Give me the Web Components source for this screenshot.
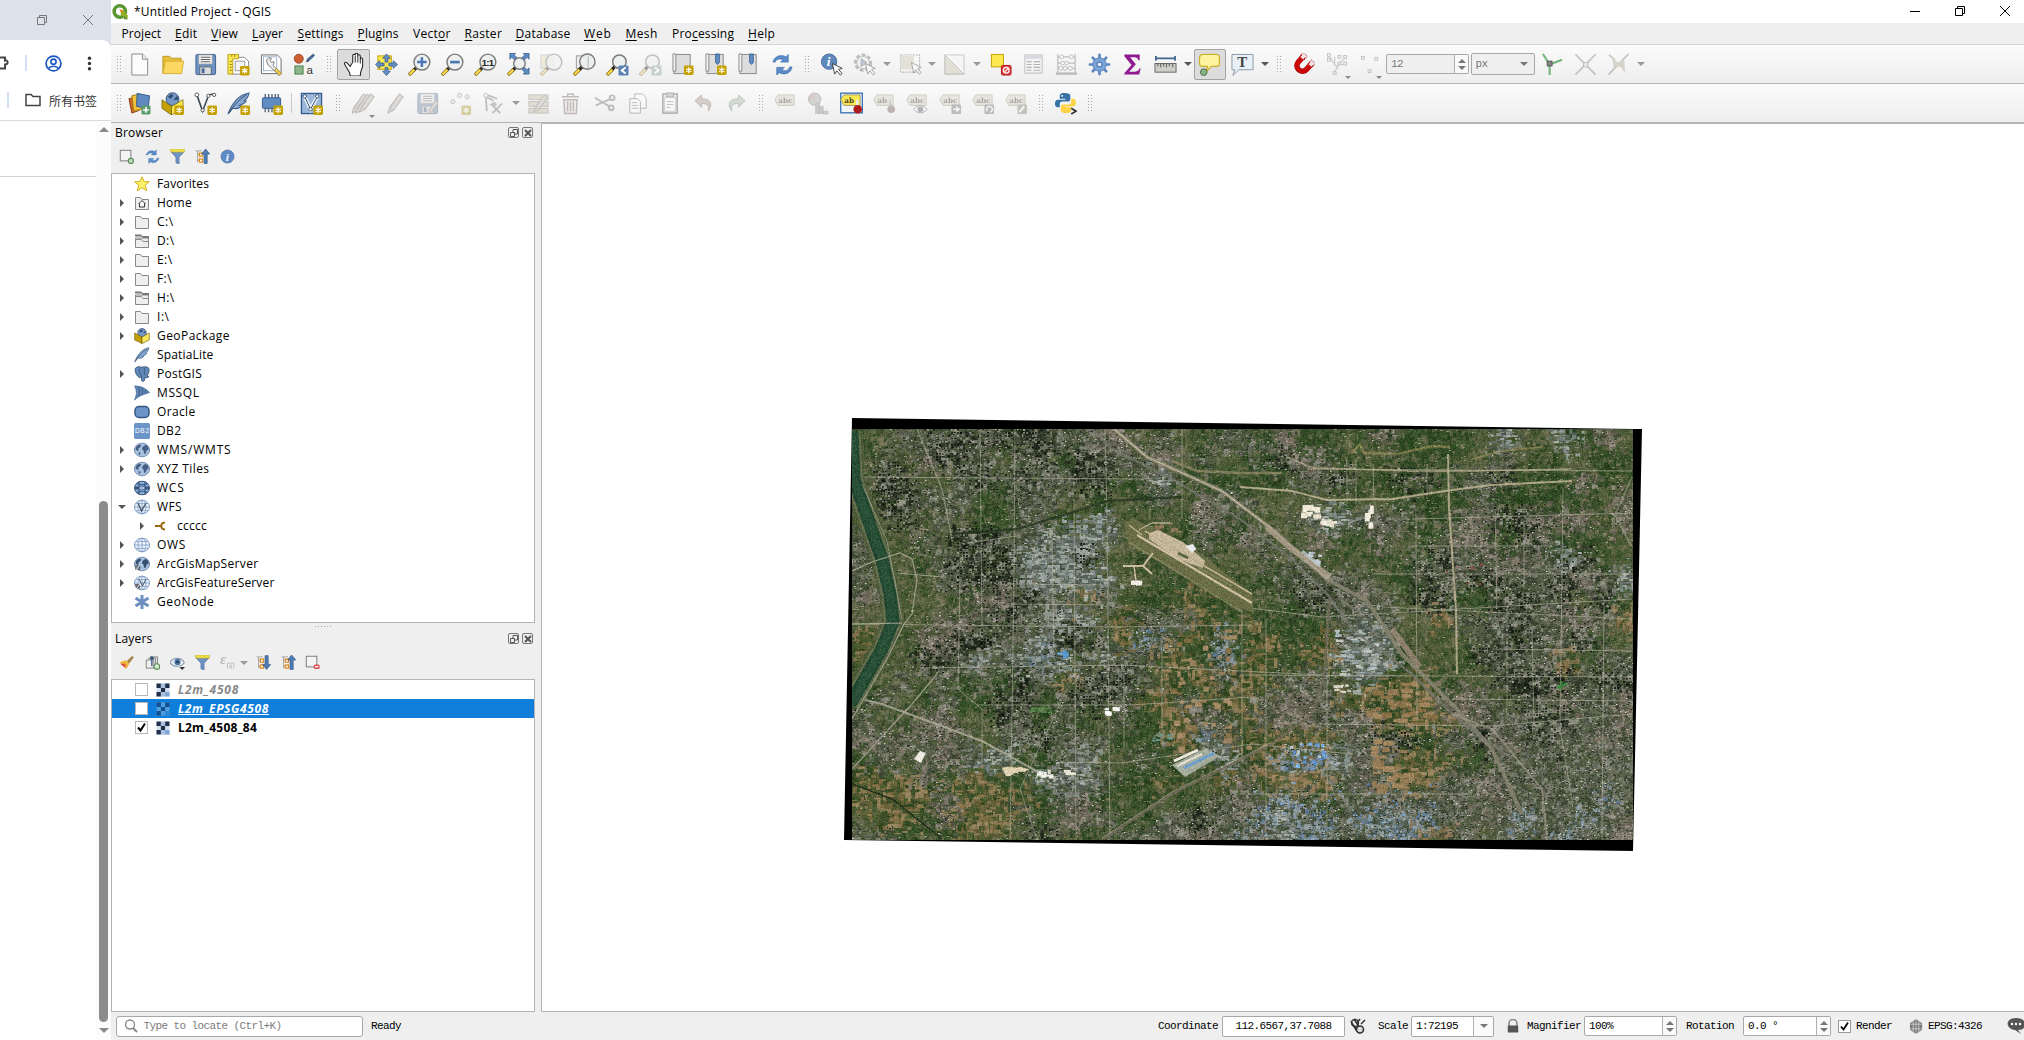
<!DOCTYPE html>
<html lang="en">
<head>
<meta charset="utf-8">
<title>*Untitled Project - QGIS</title>
<style>
html,body{margin:0;height:100%;overflow:hidden;background:#fff}
body{font:12px/16px "Open Sans","Noto Sans","Noto Sans CJK SC",sans-serif;color:#000}
</style>
</head>
<body>
<desk-top></desk-top>
<script>
/* ---------- icon library ---------- */
const star = (x, y) => `<rect x="${x}" y="${y}" width="10" height="10" rx="1.5" fill="#c4a000"/><path d="M${x+5} ${y+1.8}v6.4M${x+2.2} ${y+3.4}l5.6 3.2M${x+7.8} ${y+3.4}l-5.6 3.2" stroke="#fff" stroke-width="1.3"/>`;
const lens = (cx, cy, r, inner = '', hx = 1, hy = 23) => `<path d="M${cx-r*.7} ${cy+r*.7}L${hx+5} ${hy-5}" stroke="#222" stroke-width="3.4"/><path d="M${hx+6} ${hy-6}L${hx} ${hy}" stroke="#8a6a10" stroke-width="3.6"/><path d="M${hx+5.5} ${hy-5.5}L${hx+.6} ${hy-.6}" stroke="#fcd94f" stroke-width="2.2"/><circle cx="${cx}" cy="${cy}" r="${r}" fill="#eceeee" fill-opacity=".85" stroke="#7a7c7a" stroke-width="1.5"/>${inner}`;
const globe = (land = '#466085', base = '#a9c2e0') => `<ellipse cx="8" cy="8" rx="7.6" ry="6.8" fill="${base}" stroke="#6e87ab" stroke-width=".9"/><path d="M2.3 4.5l3-2 2 .8-1 2-2 1.2.5 2-1.5.2-1.8-1.2zM4.5 10l2 .6-.4 2.6-1.3-.6zM8.5 5l3-2.3 2.6 2.1.6 3-2 .7-1.2 3.4-1.6-.4-.3-3-1.6-1z" fill="${land}"/>`;
const grid = (c = '#7f9cc4') => `<ellipse cx="8" cy="8" rx="7.5" ry="6.8" fill="#eef4fb" stroke="${c}"/><path d="M.6 8h14.8M2 4.6h12M2 11.4h12M8 1.2v13.6" stroke="${c}" stroke-width=".8" fill="none"/><ellipse cx="8" cy="8" rx="4" ry="6.8" fill="none" stroke="${c}" stroke-width=".8"/>`;
const folder = '<path d="M1.500 14.500V2.500h5l1.500 2h6.500v10z" fill="#eee" stroke="#888a85"/>';
const sheet = (h) => `<rect x="2" y="1.5" width="17" height="20" fill="#ddd" stroke="#888"/><path d="M1 1h3v18H1z" fill="#f3f3f3" stroke="#888"/>${h}`;
const tag = (t, f='#d6d3b4') => `<path d="M.7 8l3.500-5H21v11H4.200z" fill="${f}" stroke="#a09c70"/><text x="4.500" y="11.300" font-family="DejaVu Serif" font-weight="700" font-size="7.500" fill="#45422a">${t}</text>`;
const node = (x,y)=>`<rect x="${x-1.5}" y="${y-1.5}" width="3" height="3" fill="#eee" stroke="#777" stroke-width=".9"/>`;
const cursor = '<path d="M13 11l2.300 11 2.300-3.400 3.600 4.400 1.800-1.600-3.600-4.300 3.800-1z" fill="#fff" stroke="#333" stroke-width=".9"/>';
const refresh = '<path d="M2 9C3 4 9 0 15.500 3.500L18 1v8h-8l2.500-2.500C9 5 5 6 4.500 9zM22 14c-1 6-7 9.500-13.500 6L6 22.500v-8h8L11.500 17c3.500 2 7 .5 8-3z" transform="translate(0 .5)" fill="#5b8cc8" stroke="#2f66ab" stroke-width=".6"/>';
const pencil = (x,y,s,c='#c4bbb2') => `<path transform="translate(${x} ${y}) scale(${s})" d="M0 20l2-6L12 0l4 3L6 17z" fill="${c}" stroke="#7d7770" stroke-width="1.100"/><path transform="translate(${x} ${y}) scale(${s})" d="M2 14l4 3M10 3l-7 11" stroke="#8d8780"/>`;
const treeg = (p) => `<path d="M4 3v18M4 8h6M4 18h6M1 3h10" fill="none" stroke="#999" stroke-width="1.3"/><rect x="7" y="6.500" width="5" height="5" fill="#fff" stroke="#e08a1e" stroke-width="2"/><rect x="7" y="16" width="5" height="5" fill="#fff" stroke="#e08a1e" stroke-width="2"/>${p}`;
const ICON = {
 qgis:'<circle cx="11" cy="12" r="8" fill="none" stroke="#589632" stroke-width="5"/><path d="M12 10l4.500 1 6 7-1 4-3 1-6-7z" fill="#93b023"/><path d="M17 18l6 5h-6z" fill="#589632"/><path d="M10 9l5 .5-.5 5z" fill="#ee7913"/>',
 new:'<path d="M4 1h11l5.500 5.500V23H4z" fill="#fcfcfc" stroke="#888a85"/><path d="M15 1v5.500h5.500" fill="#eee" stroke="#888a85"/>',
 open:'<path d="M2 21V3.500h7l2 2h10V10" fill="#e8c13c" stroke="#b8951f"/><path d="M2 21.500L4.500 8.500H23.500L21.500 21.500z" fill="#fcd863" stroke="#d6ae2f"/>',
 save:'<rect x="2" y="1.500" width="20.500" height="21" rx="1.500" fill="#6d94c4" stroke="#3f5f8b"/><rect x="5" y="2" width="14" height="9.500" fill="#f2f2f2" stroke="#999" stroke-width=".7"/><path d="M7 4.500h10M7 6.800h10M7 9.100h10" stroke="#666" stroke-width="1.100"/><rect x="6" y="14.500" width="12" height="8" fill="#dcdcdc" stroke="#567"/><rect x="8" y="16" width="3" height="5" fill="#456a9c"/>',
 layout:`<path d="M4.500 4.500H18l4.500 4V22h-18z" fill="#fff" stroke="#888a85"/><path d="M1 1.500h11v4.500H6v16H1z" fill="#fce94f" stroke="#b89b1c"/><path d="M3 9h2M3 12h2M3 15h2M3 18h2M5 2v2M8 2v2" stroke="#8a7414"/><rect x="8.500" y="8.500" width="10" height="10" fill="#f4f4f4" stroke="#9a9a9a"/>${star(13.500,13.500)}`,
 manager:'<path d="M1.500 2H18l4 4v15.500H1.500z" fill="#fff" stroke="#666b70"/><rect x="3.500" y="4" width="14" height="14.500" fill="#fff" stroke="#8aa0be" stroke-width=".8"/><path d="M7 7c1-1.500 3-2.500 5-1.500l-1.500 2.500 1.500 1.800 2.500-.8c.5 2 0 3-1 4L22 21l-2 2.500-9-9C8.500 13.500 6.500 10 7 7z" fill="#eee" stroke="#777"/><path d="M17 16l5.500 5-2 2.500-5.500-5.500z" fill="#e8cf52" stroke="#8a7520" stroke-width=".6"/>',
 style:'<circle cx="6" cy="6" r="4.700" fill="#cf5f33" stroke="#8a3a1a" stroke-width=".8"/><path d="M15 8L22 1.500" stroke="#4a6a94" stroke-width="3"/><path d="M13 10l2-3 1.500 1.500z" fill="#333"/><rect x="2" y="13.500" width="8.500" height="8.500" fill="#8cb88c" stroke="#4a7d4a"/><text x="14" y="22" font-family="Liberation Sans" font-size="12" fill="#333">a</text>',
 hand:'<path d="M8.500 14L5.200 10.400C3.500 8.800 1.800 10.500 3 12.200L8 20.500 8.500 24H19l.500-4 2-6V6.500c0-1.700-2.400-1.700-2.400 0V3.300c0-1.900-2.600-1.900-2.600 0V1.600c0-1.900-2.700-1.900-2.700 0V2.600c0-1.800-2.600-1.600-2.600 0v7z" fill="#fff" stroke="#222" stroke-width="1.100"/><path d="M13.800 3v7M16.500 3v7M19.100 6v5" stroke="#222" stroke-width="1"/>',
 pansel:'<rect x="3" y="3" width="14" height="14" fill="#fce94f" stroke="#c4a000"/><path d="M12 1l4 4.500h-2.500v4h-3v-4H8zM12 23.500l4-4.500h-2.500v-4h-3v4H8zM.5 12L5 8v2.500h4.500v3H5V16zM23.500 12L19 8v2.500h-4.500v3H19V16z" fill="#6690c4" stroke="#345b8e" stroke-width=".8"/>',
 zin:lens(14.500,9.500,8.300,'<path d="M14.500 4.500v10M9.500 9.500h10" stroke="#4a78b4" stroke-width="2.600"/>'),
 zout:lens(14.500,9.500,8.300,'<path d="M9.500 9.500h10" stroke="#4a78b4" stroke-width="2.800"/>'),
 z11:lens(14.500,9.500,8.300,'<text x="8" y="13.300" font-family="Liberation Sans" font-weight="700" font-size="10" textLength="13" fill="#222">1:1</text>'),
 zfull:lens(13,11,6,'<path d="M3 0h6L7.500 2l2.700 2.700L7.700 7 5 4.500 3 6.500zM23 0h-6l1.500 2-2.700 2.700L18.300 7 21 4.500l2 2zM23 22h-6l1.500-2-2.700-2.700 2.500-2.300L21 17.500l2-2z" fill="#5f8bc0" stroke="#345b8e" stroke-width=".8"/>'),
 zsel:'<rect x="1" y="2" width="13" height="14" fill="#e8dfa8" stroke="#aaa"/>'+lens(14.500,9.500,8.300),
 zlay:'<rect x="3.500" y="3" width="12" height="13" fill="#eee" stroke="#999"/>'+lens(15,9,8,'<path d="M16 3.500v12" stroke="#bbb"/>'),
 zlast:lens(14,9,7,'<rect x="13" y="13" width="10.500" height="10.500" rx="1" fill="#5d83b5"/><path d="M20.500 15l-4 3.200 4 3.200" fill="none" stroke="#fff" stroke-width="2"/>'),
 znext:lens(14,9,7,'<rect x="13" y="13" width="10.500" height="10.500" rx="1" fill="#8aa"/><path d="M16.500 15l4 3.200-4 3.200" fill="none" stroke="#fff" stroke-width="2"/>'),
 nmap:sheet(star(12.500,13)),
 nbook:sheet('<path d="M11 1h4v9l-2 2-2-2z" fill="#5f8bc0" stroke="#345b8e" stroke-width=".8"/>'+star(12.500,13)),
 book:sheet('<path d="M12 1h4v9l-2 2-2-2z" fill="#5f8bc0" stroke="#345b8e" stroke-width=".8"/>'),
 refresh,
 ident:`<circle cx="9.500" cy="9" r="8" fill="#5f88bd" stroke="#466f9f"/><text x="7" y="13.500" font-family="Liberation Serif" font-style="italic" font-weight="700" font-size="14" fill="#fff">i</text>${cursor}`,
 action:`<circle cx="10.500" cy="10" r="8" fill="none" stroke="#777" stroke-width="3" stroke-dasharray="4 2"/><circle cx="10.500" cy="10" r="6.500" fill="#eee" stroke="#777"/><path d="M8.500 6l6 4-6 4z" fill="#6d94c4" stroke="#556"/>${cursor}`,
 select:`<rect x="1.500" y="2" width="20" height="18" fill="none" stroke="#555" stroke-dasharray="2 1.200"/><rect x="1.500" y="3" width="14" height="14" fill="#cfc8a6"/><g transform="translate(0 -1)">${cursor}</g>`,
 desel:'<path d="M2 2h20v20H2z" fill="#f5f5f3" stroke="#888"/><path d="M2 2v20h20z" fill="#cfc8a6" stroke="#888"/><path d="M4 2L22 20" stroke="#fff" stroke-width="1.500"/>',
 unsel:'<rect x="2.500" y="1.500" width="12.500" height="13" fill="#fce94f" stroke="#c4a000"/><rect x="13" y="13" width="10" height="10" rx="1.500" fill="#e04040" stroke="#b01010"/><circle cx="18" cy="18" r="3" fill="none" stroke="#fff" stroke-width="1.300"/><path d="M16 20l4-4" stroke="#fff" stroke-width="1.300"/>',
 table:'<rect x="3" y="2" width="18" height="19" fill="#f3f3f3" stroke="#777"/><rect x="3.500" y="2.500" width="17" height="3.500" fill="#a9b8cc"/><path d="M5 9h5M12 9h7M5 12h5M12 12h7M5 15h5M12 15h7M5 18h5M12 18h7" stroke="#666" stroke-width="1.200"/>',
 abacus:'<path d="M3 1v20M21 1v20M3 4h18M3 10.500h18M3 16h18" stroke="#777" stroke-width="1.300"/><g fill="#fff" stroke="#777"><circle cx="7" cy="4" r="2"/><circle cx="17" cy="4" r="2"/><circle cx="8" cy="10.500" r="2"/><circle cx="12" cy="10.500" r="2"/><circle cx="6" cy="16" r="2"/><circle cx="10.500" cy="16" r="2"/><circle cx="16" cy="16" r="2"/></g><path d="M1 21.500h22" stroke="#777" stroke-width="2.500"/>',
 gear:'<g stroke="#5b86be" stroke-width="2.800" stroke-linecap="round"><path d="M12 2v20M2 12h20M5 5l14 14M19 5L5 19"/></g><circle cx="12" cy="12" r="7" fill="#7fa4d6" stroke="#5b86be"/><circle cx="12" cy="12" r="3.500" fill="#5b86be"/><circle cx="12" cy="12" r="1.800" fill="#eef"/>',
 sigma:'<path d="M3.500 1.500h16v6h-1.500c-.5-2-1.500-3-4-3H9.500l6 7.300L8.500 19.500h6c3 0 4-1.500 5-3.500h1L19 22.500H3.500V21l7.500-8.500-7.500-9z" fill="#8f1a92"/>',
 meas:'<path d="M2 5.500h20M2 3v5M22 3v5" stroke="#41658f" stroke-width="1.800"/><rect x="1" y="11" width="22" height="9" fill="#cfcfc8" stroke="#666"/><path d="M4 11v3M7 11v4M10 11v3M13 11v4M16 11v3M19.500 11v4" stroke="#555"/>',
 tip:'<path d="M5 1.500h14c3 0 3.500 1.500 3.500 6.500s-.5 6-3.500 6h-5l-5.500 5.500 1.500-5.500H5c-3 0-3.500-1-3.500-6S2 1.500 5 1.500z" fill="#fdf3a0" stroke="#cbb02b" stroke-width="1.300"/><circle cx="6" cy="20" r="3.500" fill="#87b187" stroke="#49704b"/>',
 T:'<path d="M1 1.500h22v16H8L2 23.500l2-6H1z" fill="#e9f1f8" stroke="#8a96a3"/><text x="6.500" y="14.500" font-family="Liberation Serif" font-weight="700" font-size="15.500" fill="#444">T</text>',
 magnet:'<g transform="translate(12 12) rotate(42) scale(.82) translate(-12 -11)"><path d="M5 3v10a7 7 0 0 0 14 0V3" fill="none" stroke="#a40000" stroke-width="7"/><path d="M5 6v7a7 7 0 0 0 14 0V6" fill="none" stroke="#cc0a0a" stroke-width="5.500"/><path d="M5 1.500v5M19 1.500v5" stroke="#f4dede" stroke-width="5"/><path d="M1.500 6.500V0h7v6.500M15.500 6.500V0h7v6.500" stroke="#a40000" stroke-dasharray="2 1"/></g>',
 vtx:'<path d="M3 3l6 9 4 4M9 12V4M9 20l4-8 8-8M13 12h8" stroke="#999" fill="none" stroke-width="1.300"/>'+node(3,2)+node(3,7)+node(14,4)+node(20,4)+node(14,11)+node(20,11)+node(9,21),
 pts:node(4,5)+node(18,6)+node(11,19),
 trace:'<path d="M9 23V12L2 1M9 12l13-5" stroke="#73b57a" stroke-width="2.200" fill="none"/><rect x="6.500" y="8.500" width="5" height="5" fill="#888" stroke="#555"/>',
 cross:'<path d="M1.500 1.500l21 21M22.500 1.500l-21 21" stroke="#888" stroke-width="1.800"/><rect x="10" y="10" width="4.500" height="4.500" fill="#ddd" stroke="#777"/>',
 selfx:'<path d="M22.500 1L1.500 22.500M2 2l6 5" stroke="#888" stroke-width="1.800"/><path d="M5 3l6 7 7-3 1 14-5-7-7 1z" fill="#b5ab80"/>',
 dsm:'<path d="M1 7l9-2 2 14-8 3z" fill="#d0642c" stroke="#8a3d14"/><path d="M4 4l9-2 1 16-8 2z" fill="#f0c23a" stroke="#a07a10"/><path d="M9.500 1.500l13 2.500-1.500 13-12-2z" fill="#5f8bc0" stroke="#345b8e"/><rect x="14" y="14" width="9.500" height="9.500" rx="1.500" fill="#5e9b6c"/><path d="M18.700 15.700v6M15.700 18.700h6" stroke="#fff" stroke-width="1.600"/>',
 gpkg:'<circle cx="12" cy="7.500" r="6.700" fill="#7397c6" stroke="#34506f"/><path d="M7 5l4-3 2 2-3 3zM13 8l4-4 1 4z" fill="#2d4a6d"/><path d="M1 8l10 7v9L1 17z" fill="#c4a000" stroke="#6b5800" stroke-width=".7"/><path d="M23 8l-12 7v9l12-7z" fill="#fce94f" stroke="#6b5800" stroke-width=".7"/>',
 shp:'<path d="M3 3l6 17L15 4c2-2 4-2 6-1" fill="none" stroke="#3c4a57" stroke-width="1.700"/><g fill="#fff" stroke="#555"><circle cx="3" cy="3" r="2"/><circle cx="15" cy="4" r="1.700"/><circle cx="21" cy="3" r="1.700"/><circle cx="9" cy="19" r="1.700"/></g>',
 feather:'<path d="M1 23C5 12 12 3 23 1c-1 5-3 7-5 8l2 .5c-2 3-5 4-7 4.500l2 .7C12 18 8 17.500 6 17z" fill="#87a8d0" stroke="#3f5f8b" stroke-width="1.100"/><path d="M2 22C7 14 12 8 20 3" fill="none" stroke="#2d4a6d"/>',
 chip:'<path d="M5.500 2v19M9 2v19M12.500 2v19M16 2v19M19 2v19" stroke="#5c6b7a" stroke-width="1.500"/><rect x="2.500" y="6" width="19" height="11" rx="1" fill="#5f8bc0" stroke="#345b8e"/>',
 virt:'<rect x="1.500" y="1.500" width="21" height="21" fill="#9bb8db" stroke="#345b8e" stroke-width="1.400"/><path d="M5 5l6 13L18 5" fill="none" stroke="#e9f0f7" stroke-width="4"/><path d="M5 5l6 13L18 5" fill="none" stroke="#34506f"/><g fill="#fff" stroke="#34506f"><circle cx="5" cy="4.500" r="1.800"/><circle cx="18" cy="4.500" r="1.800"/><circle cx="11" cy="18" r="1.800"/></g>',
 pens:pencil(0,2,1)+pencil(4,2,1)+pencil(8,2,.95),
 pen:pencil(4,2,1),
 addpt:'<g fill="#ddd" stroke="#888"><circle cx="4" cy="10" r="2.200"/><circle cx="11" cy="3.500" r="2.200"/><circle cx="19" cy="5" r="2.200"/></g>',
 vtool:'<path d="M4 4l1 16M5 3l11 4M4 5l8 4M19 22l-9-9M11 22l10-10" stroke="#777" stroke-width="1.800" fill="none"/><circle cx="4" cy="3.500" r="2.200" fill="#eee" stroke="#888"/><path d="M8 13l5-3 3 3-4 3z" fill="#888"/>',
 form:'<rect x="2" y="3" width="20" height="5" fill="#cdbf97" stroke="#8a8575"/><rect x="2" y="10" width="20" height="5" fill="#cdbf97" stroke="#8a8575"/><rect x="2" y="17" width="20" height="5" fill="#cdbf97" stroke="#8a8575"/>'+pencil(7,3,.9),
 trash:'<path d="M5 8h14l-1 14.500H6z" fill="#eee0e0" stroke="#8b6f6f" stroke-width="1.500"/><path d="M3 5h18M9 5V2h6v3M9 10v10M12 10v10M15 10v10" fill="none" stroke="#8b6f6f" stroke-width="1.500"/>',
 cut:'<path d="M2 6l15 9M3 14l16-7" stroke="#777" stroke-width="2"/><circle cx="20" cy="6" r="2.500" fill="none" stroke="#777" stroke-width="2"/><circle cx="19" cy="16.500" r="2.500" fill="none" stroke="#777" stroke-width="2"/>',
 copy:'<path d="M9 2h8l4 4v11H9z" fill="#fff" stroke="#666"/><path d="M4 7h8l3 3v12H4z" fill="#fff" stroke="#666"/><path d="M6 11h6M6 14h7M6 17h7" stroke="#777"/>',
 paste:'<rect x="4" y="2" width="15" height="20" fill="#ddd" stroke="#555" stroke-width="1.500"/><rect x="6" y="6" width="11" height="14" fill="#fff" stroke="#888" stroke-width=".7"/><rect x="8" y="1" width="7" height="4" fill="#aaa" stroke="#555"/><path d="M8 10h7M8 13h7M8 16h4" stroke="#777"/>',
 undo:'<path d="M3 9l7-6v4c8 0 13 4 7 13 1-6-1-8-7-8v4z" fill="#b79b88" stroke="#8a7465"/>',
 redo:'<path d="M21 9l-7-6v4c-8 0-13 4-7 13-1-6 1-8 7-8v4z" fill="#a0bba1" stroke="#75907a"/>',
 lab:tag('abc'),
 chart:'<circle cx="8" cy="7.500" r="6.500" fill="#9fb59c" stroke="#777"/><path d="M8 7.500V1a6.500 6.500 0 0 0-6 8z" fill="#c08f88"/><path d="M9 23V12h4v11M13 23v-8h4v8M17 23v-3h5v3z" fill="#999" stroke="#777" stroke-width=".7"/>',
 labpin:'<rect x=".8" y="1.200" width="22.500" height="20.500" fill="#f3f6fa" stroke="#3b73b5" stroke-width="1.400"/>'+tag('ab','#fce94f')+'<path d="M18 8v10" stroke="#eee" stroke-width="2.500"/><circle cx="18.500" cy="18" r="4.500" fill="#b01c1c"/>',
 labp2:tag('ab')+'<circle cx="19" cy="18" r="4" fill="#836161"/><path d="M18 9v6" stroke="#999" stroke-width="2"/>',
 labeye:tag('abc')+'<path d="M8 18c4-5 10-5 14 0-4 5-10 5-14 0z" fill="#fff" stroke="#555"/><circle cx="15" cy="18" r="3" fill="#567"/>',
 labmv:tag('abc')+'<rect x="13" y="13" width="10" height="10" rx="1" fill="#777"/><path d="M15 18h5M18 15.500l3 2.500-3 2.500" stroke="#fff" fill="none" stroke-width="1.500"/>',
 labrot:tag('abc')+'<rect x="13" y="13" width="10" height="10" rx="1" fill="#777"/><path d="M16 20a3 3 0 1 1 3 1" stroke="#fff" fill="none" stroke-width="1.500"/>',
 labed:tag('abc')+'<rect x="13" y="13" width="10" height="10" rx="1" fill="#8a8a70"/><path d="M15 21l5-6" stroke="#fff" stroke-width="2"/>',
 python:'<path d="M11 1c-5 0-5 2-5 4v2h6v1H4c-4 0-4 8 0 8h2v-3c0-2 1-3 3-3h5c2 0 3-1 3-3V4c0-2-2-3-6-3z" fill="#3772a4"/><path d="M13 22c5 0 5-2 5-4v-2h-6v-1h8c4 0 4-8 0-8h-2v3c0 2-1 3-3 3h-5c-2 0-3 1-3 3v3c0 2 2 3 6 3z" fill="#fdd348"/><circle cx="8.500" cy="4" r="1" fill="#fff"/><path d="M18 17l5 3-5 3" fill="none" stroke="#333" stroke-width="1.800"/>',
 addl:'<rect x="2" y="2" width="17" height="17" fill="#f3f3f3" stroke="#777" stroke-width="1.500"/><circle cx="19" cy="19" r="4" fill="#c5e0c5" stroke="#5a8f5a" stroke-width="2"/>',
 reml:'<rect x="2" y="2" width="17" height="17" fill="#f3f3f3" stroke="#777" stroke-width="1.500"/><rect x="14" y="15" width="9.500" height="7.500" rx="2.500" fill="#e05050"/><path d="M16 18.700h5.500" stroke="#fff" stroke-width="2"/>',
 filt:'<path d="M2 5h20l-7.500 8v11l-5-2v-9z" fill="#6d94c4" stroke="#47699a"/><path d="M1 0h22v5H1z" fill="#f0de4a" stroke="#b3a022" stroke-width=".8"/>',
 coll:treeg('<path d="M17 0l6.500 8h-4v15h-5V8h-4z" fill="#4f7db5" stroke="#2c5080"/>'),
 expd:treeg('<path d="M17 23l6.500-8h-4V1h-5v14h-4z" fill="#4f7db5" stroke="#2c5080"/>'),
 info:'<circle cx="12" cy="12" r="10.500" fill="#5f8bc4" stroke="#4a74aa"/><text x="9" y="18.500" font-family="Liberation Serif" font-style="italic" font-weight="700" font-size="18" fill="#fff">i</text>',
 brush:'<path d="M13 10l8-8 2 2-7 9z" fill="#a5894a" stroke="#7a6020" stroke-width=".7"/><path d="M1 12l9-4 7 6-6 8z" fill="#f0b93a"/><path d="M2 14l9 0-2 6z" fill="#e05050"/><path d="M8 19l6-3-2 6z" fill="#f29b3b"/>',
 grp:'<path d="M2 8h12v13H2zM5 5h12v14M8 3h12v13" fill="none" stroke="#777" stroke-width="1.400"/><path d="M11 18V5M8 7l3-4 3 4" fill="none" stroke="#2d4f7a" stroke-width="2"/><circle cx="19" cy="18.500" r="4.500" fill="#d5ead5" stroke="#5a8f5a" stroke-width="1.800"/>',
 eye:'<path d="M0 12C5 3 18 3 23 12 18 20 5 20 0 12z" fill="#e9eef4" stroke="#8798ab" stroke-width="1.700"/><circle cx="12" cy="11" r="5" fill="#4d74a5"/><circle cx="12" cy="11" r="2" fill="#203650"/><path d="M15 19h9l-4.500 5z" fill="#333"/>',
 eps:'<text x="0" y="15" font-family="Liberation Serif" font-weight="700" font-size="24" fill="#666">ε</text><path d="M12 22v-9h10v9M16 22v-6h2v6" fill="none" stroke="#777" stroke-width="1.500"/>'
};
for (const k of ['gpkg','shp','feather','chip','virt']) ICON[k + 'n'] = ICON[k] + star(14,14);
ICON.saveed = ICON.save + pencil(12,9,.7); ICON.addptn = ICON.addpt + star(13,14);
const SMALL = {
 star:'<path d="M8 .7l2.100 5h5.200l-4.100 3.500 1.600 5.600L8 11.700l-4.800 3.100 1.600-5.600L.7 5.700h5.200z" fill="#fcf36a" stroke="#d4b01c"/>',
 home:folder+'<path d="M4.500 9L8 5.500 11.500 9M5.500 8.500V12h5V8.500" fill="#fff" stroke="#333"/>',
 folder, folderl:'<path d="M1.500 14.500v-8h6l1.500 2h5.500v6zM1.500 6.500V5h13v4" fill="#eee" stroke="#888a85"/><path d="M1 1.500h6l1.500 1.500H15v2H9L7.500 3.500H1z" fill="#777"/>',
 gpkg:'<circle cx="8" cy="4.800" r="4.300" fill="#7397c6" stroke="#34506f" stroke-width=".7"/><path d="M5 3l3-1.500 1 1-2 2zM9 5l2-2 .5 2z" fill="#2d4a6d"/><path d="M.7 5L8 9v6.500L.7 12z" fill="#c4a000" stroke="#6b5800" stroke-width=".6"/><path d="M15.300 5L8 9v6.500l7.300-3.500z" fill="#f7e65a" stroke="#6b5800" stroke-width=".6"/>',
 feather:`<g transform="scale(.65)">${ICON.feather}</g>`,
 pg:'<path d="M1.500 2C4 0 6 .8 8 1.200c3-.8 6-.5 7 1.300.6 2-.5 5.500-2 7.500l2 .6c-1 1.200-2.500 1.200-4 .9l-.5 3c-1 1.500-3 1-3-.5V9.500L6 12 3.500 10C1.500 8 .5 4 1.500 2z" fill="#5f87b8" stroke="#34506f" stroke-width=".8"/><path d="M6 2.500C4.500 5 6 8 7 9M10.500 2c-1 3 .5 5 0 7" fill="none" stroke="#34506f" stroke-width=".7"/>',
 ms:'<path d="M.5 1c6 0 11 2 15 6.500C11 9 5 10.500 .5 15 3 10 3 5 .5 1z" fill="#5f87b8" stroke="#47699a" stroke-width=".8"/><path d="M4.500 2c1.500 3 1.500 6 0 9M8 3c1 2.500 1 4.500 0 6.500M11.500 5v3.500" fill="none" stroke="#34506f" stroke-width=".8"/>',
 ora:'<rect x="1" y="2.500" width="14" height="11" rx="4" fill="#6b94c9" stroke="#34557f" stroke-width="1.500"/>',
 db2:'<rect width="16" height="16" rx="1.500" fill="#6b94c9"/><text x="1" y="10.300" font-family="Liberation Sans" font-size="6.500" textLength="14" fill="#fff">DB2</text>',
 globe:globe(), wcs:'<ellipse cx="8" cy="8" rx="7.500" ry="6.800" fill="#8fb0d8" stroke="#34557f"/><path d="M1 6.500h14v3H1z" fill="#34557f"/><path d="M2.500 3.500C6 5 10 5 13.500 3.500M2.500 12.500c3.500-1.500 7.500-1.500 11 0M5 1.500v13M11 1.500v13" stroke="#34557f" stroke-width="1.100"/><path d="M5.500 7h5v2h-5z" fill="#a9c2e0"/>',
 wfs:grid()+'<path d="M4 4l3.500 8L12 4" fill="none" stroke="#456" stroke-width="1.300"/>', ows:grid(),
 ams:globe('#34506f')+'<path d="M1 9h5v5H1z" fill="#555" opacity=".65"/><path d="M2 14l4-5" stroke="#eee"/>',
 afs:grid()+'<path d="M5 4l3.500 7L12 4" fill="none" stroke="#456"/><path d="M1 9h5v4.500H2z" fill="#444" opacity=".75"/><path d="M2 14l4-5" stroke="#eee"/>',
 node:'<path d="M8 1v14M1.500 4l13 8M14.500 4l-13 8" stroke="#6b90c0" stroke-width="3"/>',
 conn:'<path d="M1 8h6" stroke="#9a6a10" stroke-width="2"/><path d="M11 4.500c-5 .5-5 6.500 0 7" fill="none" stroke="#9a6a10" stroke-width="2"/>',
 raster:'<path d="M1.500 1.500h13v13h-13z" fill="#d3dff0"/><path d="M1.500 1.500h4.400v4.400H1.500zM10.100 1.500h4.400v4.400h-4.400zM1.500 10.100h4.400v4.400H1.500zM5.900 5.900h4.200v4.200H5.900z" fill="#20304a"/><path d="M5.900 1.500h4.200v4.400H5.900zM5.900 10.100h4.200v4.400H5.900z" fill="#a8bfdf"/><path d="M10.100 10.100h4.400v4.400h-4.400z" fill="#7fa2d4"/>',
 rastersel:'<path d="M1.500 1.500h13v13h-13z" fill="#4d9fe2"/><path d="M1.500 1.500h4.400v4.400H1.500zM10.100 1.500h4.400v4.400h-4.400zM1.500 10.100h4.400v4.400H1.500zM5.900 5.900h4.200v4.200H5.900z" fill="#12508f"/><path d="M10.100 10.100h4.400v4.400h-4.400z" fill="#2d86d3"/>'
};
const svg = (body, size, box = 24) => `<svg width="${size}" height="${size}" viewBox="0 0 ${box} ${box}" fill="none" style="display:block;flex:none">${body}</svg>`;
const define = (name, render, after) => customElements.define(name, class extends HTMLElement {
  connectedCallback() {
    if (this.shadowRoot) return;
    const root = this.attachShadow({mode:'open'});
    root.innerHTML = '<style>*{box-sizing:border-box}</style>' + render(this);
    if (after) after(this, root);
  }
});

/* Text set to a fixed advance width by letter spacing. */
define('fit-text', () => `<style>:host{display:inline-block;white-space:pre;flex:none}span{display:inline-block}:host([ul]) span{text-decoration:underline}:host([mono]){font-family:"Liberation Mono",monospace;font-size:11px}</style><span><slot></slot></span>`,
 (el, root) => {
  const s = root.querySelector('span'), w = +el.getAttribute('w'), n = el.textContent.length;
  s.style.letterSpacing = ((w - s.getBoundingClientRect().width) / n).toFixed(3) + 'px';
  el.style.width = w + 'px';
 });
const fit = (t, w, extra = '') => `<fit-text w="${w}" ${extra}>${t}</fit-text>`;

define('tool-bar', el => {
  const items = TOOLBARS[el.getAttribute('kind')];
  const out = items.map(([n, w, f = '']) => {
    if (n === '|') return `<i class="grip" style="width:${w}px"></i>`;
    if (n === '!') return `<i class="sep" style="width:${w}px"></i>`;
    if (n === 'v') return `<i class="arr ${f}" style="width:${w}px"><b></b></i>`;
    if (n === '_') return `<i style="width:${w}px"></i>`;
    if (n === 'spin') return `<num-box dim w="83" h="20" style="margin-right:1.500px">12</num-box>`;
    if (n === 'combo') return `<num-box dim combo w="64" h="22">px</num-box>`;
    return `<span class="it ${f}" style="width:${w}px">${svg(ICON[n], 23)}${f.includes('m') ? '<em></em>' : ''}</span>`;
  }).join('');
  return `<style>
  :host{display:flex;align-items:center;height:39px;flex:none;padding-left:3px;background:linear-gradient(#fbfbfb,#eee);border-bottom:1px solid #b4b4b4}
  i,.it{display:flex;flex:none;align-items:center;justify-content:center;height:31px;position:relative}
  .grip::before{content:"";width:6px;height:18px;background:radial-gradient(circle,#aaa 0 .7px,transparent .9px) 0 0/3px 3px}
  .sep::before{content:"";width:1px;height:20px;background:#c8c8c8}
  b,em{display:block;border:4px solid transparent;border-top-color:#555;border-bottom:0}.arr.d b{border-top-color:#999}
  em{position:absolute;right:4px;bottom:1px;border-width:3px;border-bottom:0;border-top-color:#888}
  .d svg{opacity:.44;filter:saturate(.6)} .on{background:#dcdcdc;border:1px solid #a2a2a2;border-radius:2px}
  </style>${out}`;
});
const D = 'd';
const TOOLBARS = {
 main:[['|',9],['new',33],['open',33],['save',33],['layout',33],['manager',33],['style',33],['|',16],['hand',33,'on'],['pansel',33],['zin',33],['zout',33],['z11',33],['zfull',33],['zsel',33,D],['zlay',33],['zlast',33],['znext',33,D],['nmap',33],['nbook',33],['book',33],['refresh',33],['|',15.5],['ident',33],['action',33,D],['v',13,D],['select',33,D],['v',11,D],['desel',33,D],['v',13,D],['unsel',33],['table',33,D],['abacus',33,D],['gear',33],['sigma',33],['meas',33],['v',12],['tip',32,'on'],['T',33],['v',13],['|',15.5],['magnet',33],['vtx',35,'d m'],['pts',31,'d m'],['spin'],['combo'],['_',1],['trace',33],['cross',33,D],['selfx',33,D],['v',13,D]],
 edit:[['|',9],['dsm',33],['gpkgn',33],['shpn',33],['feathern',33],['chipn',33],['!',7],['virtn',33],['|',19],['pens',32,'d m'],['pen',32,D],['saveed',33,D],['addptn',33,D],['vtool',33,D],['v',12,D],['form',32,D],['trash',33.5,D],['cut',33,D],['copy',33,D],['paste',33,D],['undo',33,D],['redo',33,D],['|',16],['lab',33,D],['chart',33,D],['labpin',33],['labp2',33,D],['labeye',33,D],['labmv',33,D],['labrot',33,D],['labed',33,D],['|',16],['python',33],['|',16]]
};

define('num-box', el => {
  const a = n => el.hasAttribute(n), w = el.getAttribute('w'), h = el.getAttribute('h') || 21;
  return `<style>:host{display:flex;flex:none;width:${w}px;height:${h}px;border:1px solid #a8a8a8;border-radius:2px;background:${a('dim') ? '#efefef' : '#fff'};align-items:center;font:11px/14px "Liberation Mono",monospace;letter-spacing:-.6px;overflow:hidden}
  .t{flex:1;padding-left:${a('center') ? 0 : 4}px;text-align:${a('center') ? 'center' : 'left'};color:${a('dim') ? '#777' : '#000'};white-space:pre}
  .b{width:${a('combo') ? 20 : 14}px;height:100%;border-left:1px solid ${a('combo') && a('dim') ? 'transparent' : '#b0b0b0'};background:${a('combo') && a('dim') ? 'none' : '#fafafa'};display:flex;flex-direction:column;gap:3px;align-items:center;justify-content:center}
  .u,.v{border:4px solid transparent}.u{border-bottom-color:#777;border-top:0}.v{border-top-color:#777;border-bottom:0}</style>
  <div class="t"><slot></slot></div>${a('center') ? '' : `<div class="b">${a('combo') ? '' : '<i class="u"></i>'}<i class="v"></i></div>`}`;
});

define('menu-bar', () => {
  const m = [['Pro<u>j</u>ect',39.6,14],['<u>E</u>dit',22,14],['<u>V</u>iew',27,14],['<u>L</u>ayer',31,14.5],['<u>S</u>ettings',46,14],['<u>P</u>lugins',41,14.5],['Vect<u>o</u>r',37.5,14],['<u>R</u>aster',37.5,13.5],['<u>D</u>atabase',55,13.5],['<u>W</u>eb',27.500,14],['<u>M</u>esh',32,14.5],['Pro<u>c</u>essing',62,14],['<u>H</u>elp',27,0]];
  return `<style>:host{display:flex;height:22px;flex:none;align-items:center;padding:1px 0 0 10.500px;background:#efefef;border-bottom:1px solid #d6d6d6}u{text-underline-offset:1.500px;text-decoration-thickness:1px}</style>` + m.map(([t,w,g]) => fit(t, w, `style="margin-right:${g}px"`)).join('');
});

define('title-bar', () => `<style>:host{display:flex;height:23px;flex:none;background:#fff;align-items:center;padding:0 14px 0 1px;gap:5px}
  .sp{flex:1}.wb{display:flex;gap:35px;align-items:center;margin-top:-2px}</style>
  ${svg(ICON.qgis,17)}${fit('*Untitled Project - QGIS',137)}<span class="sp"></span>
  <div class="wb">${svg('<path d="M0 5.500h10" stroke="#000"/>',10,10)}
  ${svg('<path d="M.5 2.500h7v7h-7zM2.500 2.500v-2h7v7h-2" stroke="#000"/>',10,10)}
  ${svg('<path d="M0 0l10 10M10 0L0 10" stroke="#000"/>',10,10)}</div>`);

/* Dock: title with float/close buttons, a small tool row and a bordered body. */
define('dock-panel', el => `<style>:host{display:flex;flex-direction:column;flex:none}
  .h{display:flex;height:19px;align-items:center;padding:0 2px 0 4px;gap:3px}.h span{flex:1}
  .k{width:11px;height:11px;border:1px solid #777;border-radius:2px;display:flex;align-items:center;justify-content:center}
  .t{display:flex;height:31px;align-items:center;padding:0 0 2px 2.500px}.t i{display:flex;justify-content:center;flex:none}
  .b{flex:1;border:1px solid #b4b4b4;background:#fff;overflow:hidden}
  .a{border:4px solid transparent;border-top-color:#999;border-bottom:0}.d{opacity:.4}</style>
  <div class="h"><span>${fit(el.getAttribute('name'), el.getAttribute('w'))}</span>
  <div class="k">${svg('<path d="M.5 3.500h4v4h-4zM3 3.500v-3h4.500v4.500h-3" stroke="#555"/>',8,8)}</div><div class="k">${svg('<path d="M1 1l6 6M7 1L1 7" stroke="#555" stroke-width="2"/>',8,8)}</div></div>
  <div class="t">${el.getAttribute('tools').split(' ').map(x => { const [n,w] = x.split(':'); return n === 'v' ? `<i style="width:${w}px"><b class="a"></b></i>` : `<i class="${n==='eps'?'d':''}" style="width:${w}px">${svg(ICON[n],15)}</i>`; }).join('')}</div>
  <div class="b"><slot></slot></div>`);

define('tree-row', el => {
  const g = n => el.getAttribute(n), chk = g('check');
  return `<style>:host{display:flex;height:19px;align-items:center;padding-left:${+(g('indent')||0)*20}px}
  .a{width:20px;display:flex;justify-content:center;flex:none}.a b{border:4px solid transparent}
  .r{border-left-color:#555!important;border-right:0!important;border-left-width:4.500px!important}.o{border-top-color:#555!important;border-bottom:0!important}
  .ic{width:20px;flex:none;display:flex;justify-content:center}
  .c{width:13px;height:13px;border:1px solid #b8b8b8;background:#fff;margin:0 5px 0 3px;flex:none}
  :host([check]){height:19.200px}
  :host([sel]){background:#0f7fdb;color:#fff;font-weight:700;font-style:italic}
  :host([style2=i]){color:#888;font-weight:700;font-style:italic}:host([style2=b]){font-weight:700}
  .tx{margin-left:5px}</style>
  <span class="a"><b class="${g('a')||''}"></b></span>
  ${chk ? `<span class="c">${chk === '1' ? svg('<path d="M2 5.500L4.500 8.500 9 1.500" stroke="#000" stroke-width="2"/>',11,11) : ''}</span>` : ''}
  <span class="ic">${svg(SMALL[g('icon')],16,16)}</span><span class="tx">${fit(el.textContent, g('w'), el.hasAttribute('sel') ? 'ul' : '')}</span>`;
});

/* The browser window that shows at the left edge of the desktop. */
define('chrome-edge', () => `<style>:host{display:flex;flex-direction:column;width:111px;flex:none;background:#fff;font-family:"Noto Sans CJK SC",sans-serif}
  .tabs{height:40px;display:flex;align-items:center;gap:36px;padding-left:37px;flex:none}
  .w{background:#dde1e9;flex:none}.bars{background:#fff;border-top-right-radius:9px;height:81px;border-bottom:1px solid #d9dadc}
  .r1,.r2{display:flex;align-items:center}.r1{height:46px}.r2{height:28px}
  .s{width:2px;height:16px;background:#cfe0f7}
  .pg{flex:1;display:flex}.c{flex:1}.c::before{content:"";display:block;height:55px;border-bottom:1px solid #cfd5d8}
  .sb{width:15px;background:#fcfcfc;display:flex;flex-direction:column;align-items:center;padding:6px 0 7px}
  .th{width:9px;height:521px;background:#8b8b8b;border-radius:4.500px;margin-top:auto;margin-bottom:6px}
  .u,.v{border:5px solid transparent}.u{border-bottom-color:#8b8b8b;border-top:0}.v{border-top-color:#8b8b8b;border-bottom:0}</style>
  <div class="w"><div class="tabs">${svg('<path d="M.5 2.500h7v7h-7zM2.500 2.500v-2h7v7h-2" stroke="#777"/>',10,10)}${svg('<path d="M0 0l10 10M10 0L0 10" stroke="#777"/>',10,10)}</div>
  <div class="bars"><div class="r1">${svg('<path d="M-4 3h7v3c3-1 4 4 0 4v4h-7" transform="translate(2 -.5)" stroke="#444" stroke-width="2"/>',16,16)}<span class="s" style="margin-left:9px"></span>
  <span style="margin-left:17.500px">${svg('<circle cx="8.500" cy="8.500" r="7.400" stroke="#1a56c4" stroke-width="1.700"/><circle cx="8.500" cy="6.700" r="2.600" stroke="#1a56c4" stroke-width="1.600"/><path d="M3.500 13.500c2-3 8-3 10 0" stroke="#1a56c4" stroke-width="1.600"/>',17,17)}</span>
  <span style="margin-left:19px">${svg('<circle cx="8" cy="3" r="1.600" fill="#333"/><circle cx="8" cy="8" r="1.600" fill="#333"/><circle cx="8" cy="13" r="1.600" fill="#333"/>',17,16)}</span></div>
  <div class="r2"><span class="s" style="margin-left:7px;margin-right:16px"></span>${svg('<path d="M1 2.500h5l2 2h7v9H1z" stroke="#444" stroke-width="1.500"/>',16,16)}<span style="margin-left:8px;margin-top:2px;color:#333">${fit('所有书签',48)}</span></div></div></div>
  <div class="pg"><div class="c"></div><div class="sb"><i class="u"></i><i class="th"></i><i class="v"></i></div></div>`);

/* Orthophoto raster: land cover is coded one letter per 20 px cell, then textured. */
const LAND = [
 'gouudduddduunnouoguu|gnggognggggowoowgno','ouondduoudgduuunouog|udnugoogggoouogoogg','oddooududuuddguwgggg|gguudogddguudgggngo',
 'odduuugguuoogoguonuu|oooogooggggugggggon','oodouogguugowooognug|oouwwuuuggnnddnnnon','uoouodduuwwwwootgugn|uoonggnogunngduggoo',
 'uoogudddwwwdooggoooo|uouooogguduunnuwdgo','uooouddduwwwwooggfgo|guuuuuogduuduuudnuw','noooognnduutuoggfggg|ogddunuoddggddudodg',
 'oooonnuduuwwofuuufgf|gggguwuootuuudunnut','fognndduuwddufbufgbg|fggfuwwooooudduudgo','foodduwuwbwowuuffgbf|fgffwwwgoogduuutguu',
 'oouougugdufuddufgfuf|fuuuowfffgooddddudd','guoguggddgudduffugff|unnuffgffnnuodunuun','uognnoodugugougffnuf|unnuunffffnnuudduun',
 'nununuouuduuugggfbuf|ffffuuddguudnuduunu','guounuwwgguwoougggwg|tbbbwnufffgguuuuuuu','fffngffggwwwuggfgofn|ftttunuftuunuuuuuuu',
 'ffffnffffgungogogoun|ubuguunuuuuunuuuubu','offgnfffugnnugguuduu|bwbbubbbbuunubuubun','uugogffoodogouuunnub|nwbbuubbttuouuubuun'
].map(s => { const [a,b] = s.split('|'); return a.slice(0,20).padEnd(20,'u') + b.slice(0,19).padEnd(19,'u'); });
const PAL = {
 g:['#2b4420','#314f24','#25401b','#3b542c','#465a34','#2f4826','#51613c','#6a6d4e'],
 o:['#4c5c36','#42552e','#5c6442','#66684a','#3a4f28','#535e3c','#757658'],
 u:['#66695c','#7f8074','#454c3a','#585c4c','#94938a','#3a4232','#70705e','#4b583a','#536044'],
 d:['#1e261b','#2a3324','#353d2d','#7c7c70','#565b4a','#181f15','#98978a','#424a38','#4a5a38'],
 w:['#7b8681','#8f9a95','#5c6862','#4a5549','#a1aaa5','#6b7670','#b4b8b0','#505c44'],
 b:['#7e90a0','#93a7b8','#4b5a50','#6380a4','#3e4b35','#a0aaac','#6e7468','#808578','#5b6450'],
 n:['#7d7469','#8f867c','#5e5a4c','#9c958c','#6a675a','#464c3a','#7b6e62','#555f45'],
 f:['#8f7a54','#857048','#3b4f29','#31481f','#9c8760','#5c5c36','#6b6238','#455a2c','#4a5c30'],
 t:['#9c8260','#917752','#80704a','#6b6238','#a58c68','#4f5c34']};
define('raster-layer', () => `<style>:host{display:block;width:798px;height:434px}canvas{display:block}</style><canvas width="798" height="434"></canvas>`, (el, root) => {
  const c = root.querySelector('canvas').getContext('2d');
  let s = 20240517; const R = () => ((s = (s * 1664525 + 1013904223) >>> 0) / 4294967296);
  const W = 781, H = 411;
  const poly = (p, col) => { c.beginPath(); p.forEach(([x,y], i) => i ? c.lineTo(x,y) : c.moveTo(x,y)); c.closePath(); c.fillStyle = col; c.fill(); };
  poly([[8,0],[790,11],[798,11],[789,433],[0,422]], '#000');
  c.save(); c.translate(8, 11); c.beginPath(); c.rect(0,0,W,H); c.clip();
  c.fillStyle = '#3f4c30'; c.fillRect(0,0,W,H);
  const at = (x,y) => LAND[Math.max(0,Math.min(20,y/20|0))][Math.max(0,Math.min(38,x/20|0))];
  const pick = a => a[R()*a.length|0];
  const box = (x,y,w,h,col,al=1) => { c.globalAlpha = al; c.fillStyle = col; c.fillRect(x,y,w,h); c.globalAlpha = 1; };
  for (let y=0;y<H;y+=4) for (let x=0;x<W;x+=4) box(x+R()*3-1,y+R()*3-1,3+R()*6,3+R()*5,pick(PAL[at(x+R()*22-11,y+R()*22-11)]),.8);
  for (let i=0;i<52000;i++) {
    const x=R()*W, y=R()*H, t=at(x+R()*18-9,y+R()*18-9);
    if (t==='f'||t==='t') { if (i%6===0) { const v = R()<.5; box(x|0,y|0, v?1+R()*3:4+R()*8, v?4+R()*7:1+R()*3, pick(PAL[t]), .85); } else if (R()<.04) box(x|0,y|0,1,1,'#c3c2b0',.7); }
    else if (t==='g'||t==='o') { if (i%2) box(x|0,y|0,1+R()*2,1+R()*4,pick(PAL[t]),.65); if (R()<.05) box(x|0,y|0,1+R()*2,1,'#aeac92',.7); }
    else if (t==='d') box((x/3|0)*3,(y/3|0)*3,2,1+R(),R()<.5?'#141a12':pick(['#a3a296','#85867a','#49543f','#56624a']),.85);
    else if (t==='w') { if (i%2) box((x/3|0)*3,(y/3|0)*3,2+R()*4,1+R()*1.500,pick(PAL.w),.9); }
    else { box(x|0,y|0,1+R()*1.500,1+R(),pick(PAL[t]),.85); const q=R(); if (q<.05) box(x|0,y|0,1.500,1,pick(['#cdcbc0','#c0c0b8','#d6d3c8', t==='b'?'#6c9ad8':'#a8aeb2'])); else if (q<.16) box(x|0,y|0,2,1,'#1f271b',.8); }
  }
  const rects = (n,col,x0,y0,w,h,bw,bh) => { for (let i=0;i<n;i++) box(x0+R()*w,y0+R()*h,bw*(.5+R()),bh*(.5+R()),pick(col)); };
  /* factory halls, blue roofs and farmland accents */
  for (let y=86;y<160;y+=5) for (let x=168;x<252;x+=7) if (R()<.7 && (y>125||x>205)) box(x,y,5,3,pick(['#848f8a','#98a29e','#6f7b76','#56625a']));
  rects(14,['#f0ead8','#e6e0cc'],448,75,16,14,6,4); rects(8,['#e6e0cc','#f0eee4'],464,86,16,7,6,4); rects(5,['#efeadd'],512,76,6,20,5,6);
  rects(34,['#a5b2b8','#b4bdbe','#8c9ca0','#c4c8c6'],480,200,42,48,5,2.500);
  rects(30,['#5f8fce','#7fb0e0','#b8c4cc','#6f93bd'],436,312,38,26,3,3); rects(60,['#5a80b4','#7f9fc4','#94a8bc'],400,352,190,55,2.500,2);
  rects(50,['#957b55','#a1865e','#8a7048'],510,252,66,44,8,4); rects(30,['#957b55','#a1865e'],518,310,34,50,8,4); rects(60,['#98805e','#a58a66','#857048'],312,200,68,120,5,4); rects(50,['#90805a','#83744a'],4,345,140,60,5,2);
  rects(8,['#a04840','#984a40'],590,130,50,24,2,1.500);
  /* roads */
  const line = (p,w,col,al=.75) => { c.beginPath(); p.forEach(([x,y],i)=> i?c.lineTo(x,y):c.moveTo(x,y)); c.lineWidth=w; c.strokeStyle=col; c.globalAlpha=al; c.stroke(); c.globalAlpha=1; };
  const L = '#b0ae9c', K = '#c2b796';
  [[[0,48],[300,50]],[[115,114],[165,107]],[[0,195],[265,198],[400,196]],[[70,239],[270,236],[470,246]],[[125,276],[280,276],[400,268]],[[205,333],[270,334],[400,315],[500,325]],[[390,178],[470,188],[780,170]],[[388,246],[780,248]],[[455,40],[780,42]],[[520,145],[780,145]],[[560,90],[780,84]],[[530,178],[780,190]],[[460,295],[640,297],[780,285]],[[388,365],[620,365]],[[560,117],[700,117]],[[160,155],[250,156]],[[160,175],[250,176]],[[600,270],[780,272]],[[640,220],[780,222]]].forEach(p=>line(p,1.200,L,.65));
  [[[163,0],[162,150],[158,411]],[[253,0],[255,90],[258,411]],[[222,70],[224,411]],[[200,100],[202,230]],[[108,150],[106,260],[130,280],[130,340]],[[128,0],[130,200]],[[414,190],[414,411]],[[475,170],[475,411]],[[564,85],[565,290]],[[643,80],[645,180]],[[672,95],[672,160]],[[711,60],[708,300],[720,370]],[[752,170],[750,411]],[[680,200],[682,300]],[[575,35],[575,70]],[[504,30],[504,75]],[[495,30],[495,75]],[[521,35],[522,75]],[[330,0],[330,90]],[[310,205],[310,310]],[[272,240],[272,320]],[[655,180],[655,290]],[[390,180],[390,330]]].forEach(p=>line(p,1,L,.6));
  line([[596,25],[597,80],[604,180],[605,245]],2,K,.8); line([[388,58],[440,62],[475,71],[540,70],[600,61],[640,56],[720,52]],1.800,K,.85); line([[435,28],[462,39],[560,42],[620,42],[720,40]],1.300,K,.7);
  line([[500,24],[508,15],[512,24],[545,25],[580,17],[598,18]],2.500,'#a0925e',.6); line([[620,30],[650,22],[690,18]],2,'#a0925e',.6); line([[0,268],[30,275],[130,312],[190,345]],2,L,.8); line([[85,245],[60,275],[0,340]],1.500,L,.7); line([[0,355],[40,370],[90,410]],1.500,'#1e2c18',.9);
  line([[185,411],[168,360],[215,260]],1.200,L,.5); line([[65,0],[90,60],[100,110]],1.500,L,.55); line([[780,48],[763,86],[780,118]],1.800,'#8f8d80',.7);
  line([[100,105],[165,100],[215,85],[255,72],[330,68]],2.500,'#2a3823',.85); line([[250,411],[320,365],[420,315],[460,285],[472,250],[478,170]],2.500,'#716a5a',.9); line([[250,409],[320,363],[420,313]],1,'#bdb69c',.6);
  /* rail corridor */
  line([[262,0],[295,28],[370,62],[420,100],[475,150],[515,172],[550,225],[605,280],[640,320],[670,385]],4,'#85826f',.9); line([[262,0],[295,28],[370,62],[420,100],[475,150]],1.200,'#cdc4a6',.9);
  line([[240,0],[260,20],[320,50],[388,90],[440,130],[475,165],[500,200],[560,245],[600,285],[660,330]],2.500,'#74756a',.8); line([[415,98],[440,120],[478,148]],6,'#a99e88',.85); line([[540,200],[568,238]],6,'#9b8878',.8); line([[600,285],[640,300],[690,360],[695,411]],2,'#9a9486',.7);
  line([[320,32],[345,42],[388,44],[430,44]],2.500,'#9a8f6b',.7); rects(8,['#b9cad6','#c8d2d6'],452,122,15,14,4,2); line([[450,122],[468,137]],3,'#c2ccd2',.8);
  /* river */
  const river=[[0,2],[2,50],[18,96],[30,130],[38,165],[41,192],[30,220],[8,258],[-2,275]];
  line(river,22,'#4d5c3a',.85); line(river,17,'#7b7f62',.5); line(river,13,'#234831',1); line(river,8,'#2a5239',.8);
  line([[0,142],[20,133],[48,124],[60,130],[65,150],[60,185],[52,195],[35,230],[0,290]],1.200,L,.8); line([[10,55],[35,112],[50,190]],1,L,.6); line([[0,195],[50,194]],1.200,L,.9); line([[46,144],[90,148]],1.200,L,.8);
  /* airport */
  poly([[272,94],[282,90],[340,118],[400,165],[402,184],[385,178],[276,115]],'#686d46'); poly([[297,104],[306,101],[331,113],[353,132],[351,139],[336,134],[321,127],[297,110]],'#c5b799');
  line([[285,106],[400,174]],2.500,'#cbbd9e',1); line([[293,102],[400,165]],1.500,'#beb08f',1); line([[277,113],[390,183]],1.500,'#8a8a62',.8); line([[287,101],[300,94],[318,94]],1.300,'#c9bb9c',.9); line([[277,96],[290,106]],1.300,'#c9bb9c',.9);
  line([[326,124],[336,129]],3,'#5c6640',1); line([[345,138],[380,157]],2.500,'#7b7c55',1);
  line([[301,124],[291,137],[271,137]],2,'#cbbd9e',1); line([[291,137],[300,145]],2,'#cbbd9e',1); line([[282,137],[284,152]],1.500,'#cbbd9e',1); rects(5,['#f4f1e8','#f0eee4'],276,149,10,5,5,3); poly([[333,117],[341,115],[344,120],[340,124]],'#e9ecee');
  /* hangars by the southern railway */
  poly([[320,336],[354,319],[368,327],[333,348]],'#a3ab9c'); line([[322,332],[346,321]],3,'#eeeadf',1); line([[325,337],[350,325]],2,'#e2ddd0',1); line([[332,339],[362,324]],3,'#6fa0cc',1);
  poly([[62,330],[68,322],[74,324],[69,334]],'#eeece2'); rects(18,['#e6dabc','#dccfab'],150,337,20,7,6,3); rects(7,['#f0efe8','#dfdccd'],185,340,12,8,5,3); rects(5,['#e8e4d4'],211,340,8,5,5,3);
  rects(4,['#5a9bd4','#6faede'],205,220,7,5,5,4); rects(14,['#6d9a90','#739d96'],300,303,20,9,4,1.500); rects(6,['#f0efe8','#fff'],252,277,10,6,4,3);
  rects(8,['#3c8f3e'],705,252,7,6,3,2); rects(14,['#4f7d42','#5d8a4d'],175,278,24,5,5,1.500); rects(8,['#e4e1d4','#d4d1c2'],479,255,18,7,5,2);
  c.restore();
  const im = c.getImageData(8,11,W,H), d = im.data;
  for (let i=0;i<d.length;i+=4) { const n=(R()-.5)*30; d[i]+=n; d[i+1]+=n; d[i+2]+=n*.9; }
  c.putImageData(im,8,11);
});

define('map-view', () => `<style>:host{display:flex;flex:1;background:#fff;border:1px solid #b4b4b4;border-right:0;padding:294px 0 0 302px;overflow:hidden}</style><raster-layer></raster-layer>`);

define('status-bar', () => {
 const lab = (t,w,l,r=4) => fit(t,w,`mono style="margin:0 ${r}px 0 ${l}px"`);
 return `<style>:host{display:flex;height:28px;flex:none;align-items:center;background:#efefef;overflow:hidden;padding-left:4.500px;font:11px/14px "Liberation Mono",monospace}
 .loc{display:flex;align-items:center;width:247px;height:21px;border:1px solid #a8a8a8;border-radius:3px;background:#fff;padding-left:7px;gap:6px;color:#7c7c7c}
 .sp{flex:1}.ck{width:13px;height:13px;background:#fff;border:1px solid #999;margin:0 5px 0 7px}svg{flex:none}</style>
 <div class="loc">${svg('<circle cx="6" cy="5.500" r="4.500" stroke="#888" stroke-width="1.300"/><path d="M9 9l4 4" stroke="#888" stroke-width="2"/>',14,14)}${fit('Type to locate (Ctrl+K)',138,'mono')}</div>
 ${lab('Ready',30,8.500)}<span class="sp"></span>
 ${lab('Coordinate',60,0)}<num-box center w="123">112.6567,37.7088</num-box>
 <span style="margin-left:5px">${svg('<path d="M1 3l5 9 3 3M4 1l5 8M2 6l8 7M10 1L7 5M15 2l-4 4" stroke="#333" stroke-width="1.500"/><circle cx="5" cy="5" r="3.500" stroke="#333" stroke-width="1.300"/><circle cx="10" cy="11.500" r="3.500" fill="#ddd" stroke="#333" stroke-width="1.600"/>',16,16)}</span>
 ${lab('Scale',30,12,3)}<num-box combo w="83">1:72195</num-box>
 <span style="margin-left:12px">${svg('<path d="M3.500 8V5a4 4 0 0 1 9 0v3" stroke="#888" stroke-width="1.800"/><rect x="2" y="7.500" width="12" height="8" rx="1" fill="#555"/>',14,16)}</span>
 ${lab('Magnifier',54,7,3)}<num-box w="93" h="20">100%</num-box>
 ${lab('Rotation',48,9,9)}<num-box w="88" h="20">0.0 °</num-box>
 <span class="ck">${svg('<path d="M2 5.500L4.500 8.500 9 1.500" stroke="#000" stroke-width="1.800"/>',11,11)}</span>${lab('Render',36,0,17)}
 ${svg('<path d="M7.500 0L14 4.500v7L7.500 16 1 11.500v-7z" fill="#777"/><path d="M1 5.500h13M1 10.500h13M7.500 0v16M4.500 2v12M10.500 2v12" stroke="#ddd" stroke-width=".8"/>',15,16)}
 ${lab('EPSG:4326',54,4,25)}<span style="width:17px;overflow:hidden;flex:none">${svg('<path d="M9 1c12 0 12 12 2 12l3 4-6-4C-2 12-2 1 9 1z" fill="#555"/><circle cx="5" cy="7" r="1.200" fill="#fff"/><circle cx="9" cy="7" r="1.200" fill="#fff"/><circle cx="13" cy="7" r="1.200" fill="#fff"/>',18,18)}</span>`;
});

const TREE = [['star','','Favorites',52],['home','r','Home',35],['folder','r','C:\\',16.5],['folderl','r','D:\\',17.5],['folder','r','E:\\',15.500],['folder','r','F:\\',15],['folderl','r','H:\\',17.5],['folder','r','I:\\',12.5],['gpkg','r','GeoPackage',73],['feather','','SpatiaLite',56.5],['pg','r','PostGIS',45],['ms','','MSSQL',42.5],['ora','','Oracle',38.5],['db2','','DB2',24.5],['globe','r','WMS/WMTS',74.5],['globe','r','XYZ Tiles',52.5],['wcs','','WCS',27.500],['wfs','o','WFS',25],['conn','r','ccccc',30,1],['ows','r','OWS',29],['ams','r','ArcGisMapServer',101.500],['afs','r','ArcGisFeatureServer',117.500],['node','','GeoNode',57.500]];

define('side-docks', () => `<style>:host{display:flex;flex-direction:column;width:430px;flex:none;padding:0 6px 0 0}
  .g{height:6px;display:flex;align-items:center;justify-content:center;flex:none}.g::before{content:"";width:18px;height:3px;background:radial-gradient(circle,#aaa 0 .7px,transparent .9px) 0 0/3px 3px}</style>
  <dock-panel name="Browser" w="48" tools="addl:26 refresh:25 filt:25 coll:25 info:25" style="height:500px">${TREE.map(([i,a,t,w,n]) => `<tree-row icon="${i}" a="${a}" w="${w}" indent="${n||0}">${t}</tree-row>`).join('')}</dock-panel>
  <div class="g"></div>
  <dock-panel name="Layers" w="37.500" tools="brush:26 grp:25 eye:25 filt:25 eps:25 v:8 expd:31 coll:20 reml:28" style="height:383px">
  <tree-row icon="raster" check="0" style2="i" w="61">L2m_4508</tree-row><tree-row icon="rastersel" check="0" sel w="91">L2m_EPSG4508</tree-row><tree-row icon="raster" check="1" style2="b" w="79">L2m_4508_84</tree-row></dock-panel>`);

define('qgis-window', () => `<style>:host{display:flex;flex-direction:column;flex:1;min-width:0;background:#efefef}.m{display:flex;flex:1;min-height:0}</style>
  <title-bar></title-bar><menu-bar></menu-bar><tool-bar kind="main"></tool-bar><tool-bar kind="edit"></tool-bar>
  <div class="m"><side-docks></side-docks><map-view></map-view></div><status-bar></status-bar>`);

define('desk-top', () => `<style>:host{display:flex;width:2024px;height:1040px;overflow:hidden}</style><chrome-edge></chrome-edge><qgis-window></qgis-window>`);
</script>
</body>
</html>
